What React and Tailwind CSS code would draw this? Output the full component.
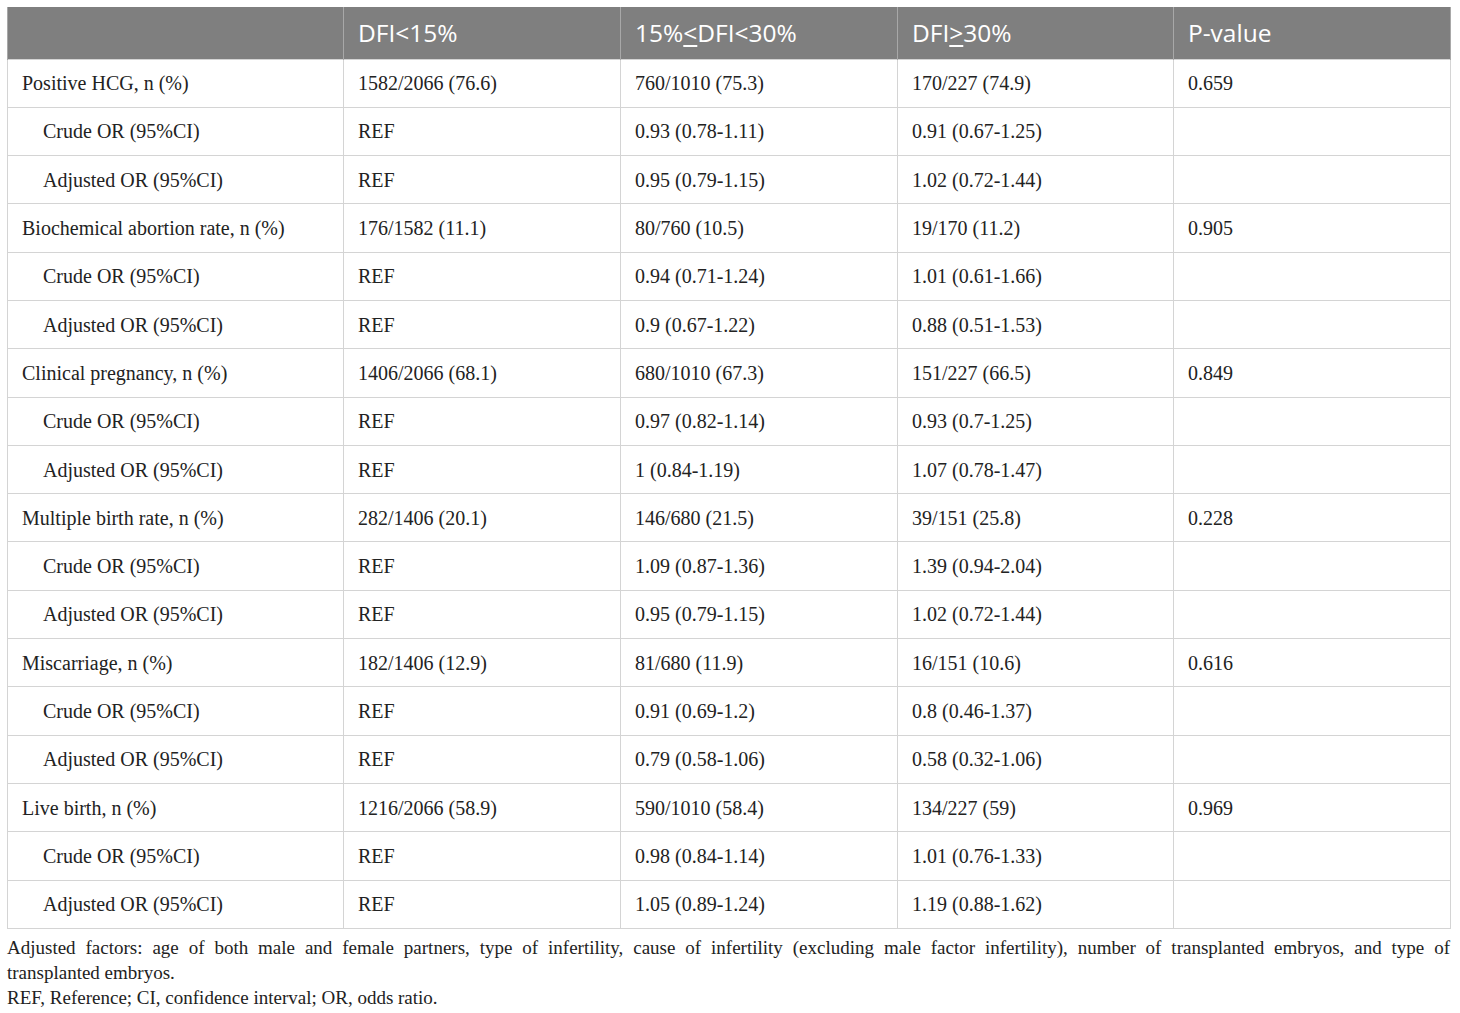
const groups = [
  {
    label: 'Positive HCG, n (%)',
    main: ['1582/2066 (76.6)', '760/1010 (75.3)', '170/227 (74.9)', '0.659'],
    crude: ['0.93 (0.78-1.11)', '0.91 (0.67-1.25)'],
    adjusted: ['0.95 (0.79-1.15)', '1.02 (0.72-1.44)'],
  },
  {
    label: 'Biochemical abortion rate, n (%)',
    main: ['176/1582 (11.1)', '80/760 (10.5)', '19/170 (11.2)', '0.905'],
    crude: ['0.94 (0.71-1.24)', '1.01 (0.61-1.66)'],
    adjusted: ['0.9 (0.67-1.22)', '0.88 (0.51-1.53)'],
  },
  {
    label: 'Clinical pregnancy, n (%)',
    main: ['1406/2066 (68.1)', '680/1010 (67.3)', '151/227 (66.5)', '0.849'],
    crude: ['0.97 (0.82-1.14)', '0.93 (0.7-1.25)'],
    adjusted: ['1 (0.84-1.19)', '1.07 (0.78-1.47)'],
  },
  {
    label: 'Multiple birth rate, n (%)',
    main: ['282/1406 (20.1)', '146/680 (21.5)', '39/151 (25.8)', '0.228'],
    crude: ['1.09 (0.87-1.36)', '1.39 (0.94-2.04)'],
    adjusted: ['0.95 (0.79-1.15)', '1.02 (0.72-1.44)'],
  },
  {
    label: 'Miscarriage, n (%)',
    main: ['182/1406 (12.9)', '81/680 (11.9)', '16/151 (10.6)', '0.616'],
    crude: ['0.91 (0.69-1.2)', '0.8 (0.46-1.37)'],
    adjusted: ['0.79 (0.58-1.06)', '0.58 (0.32-1.06)'],
  },
  {
    label: 'Live birth, n (%)',
    main: ['1216/2066 (58.9)', '590/1010 (58.4)', '134/227 (59)', '0.969'],
    crude: ['0.98 (0.84-1.14)', '1.01 (0.76-1.33)'],
    adjusted: ['1.05 (0.89-1.24)', '1.19 (0.88-1.62)'],
  },
]

const td = 'border border-[#d4d4d4] px-[14px] align-middle'

function Row({ label, cells, indent }) {
  return (
    <tr className="h-[48.3px]">
      <td className={`${td} ${indent ? 'pl-[35px]' : ''}`}>{label}</td>
      {cells.map((c, i) => (
        <td key={i} className={td}>{c}</td>
      ))}
    </tr>
  )
}

export default function App() {
  return (
    <div className="bg-white w-[1460px] h-[1013px] pt-[7px] px-[7px] text-[#222]">
      <table
        className="w-[1443px] table-fixed border-collapse text-[20px] leading-none"
        style={{ fontFamily: '"Liberation Serif", serif' }}
      >
        <colgroup>
          <col className="w-[336px]" />
          <col className="w-[277px]" />
          <col className="w-[277px]" />
          <col className="w-[276px]" />
          <col className="w-[277px]" />
        </colgroup>
        <thead>
          <tr
            className="h-[52px] bg-[#7f7f7f] text-white text-[24.5px] font-normal text-left"
            style={{ fontFamily: '"Open Sans", sans-serif' }}
          >
            <th className="border-x border-[#a8a8a8] px-[14px] font-normal"></th>
            <th className="border-x border-[#a8a8a8] px-[14px] font-normal">DFI&lt;15%</th>
            <th className="border-x border-[#a8a8a8] px-[14px] font-normal">
              15%<span className="underline underline-offset-[3px]">&lt;</span>DFI&lt;30%
            </th>
            <th className="border-x border-[#a8a8a8] px-[14px] font-normal">
              DFI<span className="underline underline-offset-[3px]">&gt;</span>30%
            </th>
            <th className="border-x border-[#a8a8a8] px-[14px] font-normal">P-value</th>
          </tr>
        </thead>
        <tbody>
          {groups.map((g) => (
            <>
              <Row key={g.label} label={g.label} cells={g.main} />
              <Row key={g.label + 'c'} label="Crude OR (95%CI)" cells={['REF', ...g.crude, '']} indent />
              <Row key={g.label + 'a'} label="Adjusted OR (95%CI)" cells={['REF', ...g.adjusted, '']} indent />
            </>
          ))}
        </tbody>
      </table>
      <div
        className="w-[1443px] mt-[6px] text-[19px] leading-[25px] text-[#222]"
        style={{ fontFamily: '"Liberation Serif", serif' }}
      >
        <p className="text-justify [text-align-last:justify]">
          Adjusted factors: age of both male and female partners, type of infertility, cause of infertility (excluding male factor infertility), number of transplanted embryos, and type of
        </p>
        <p>transplanted embryos.</p>
        <p>REF, Reference; CI, confidence interval; OR, odds ratio.</p>
      </div>
    </div>
  )
}
